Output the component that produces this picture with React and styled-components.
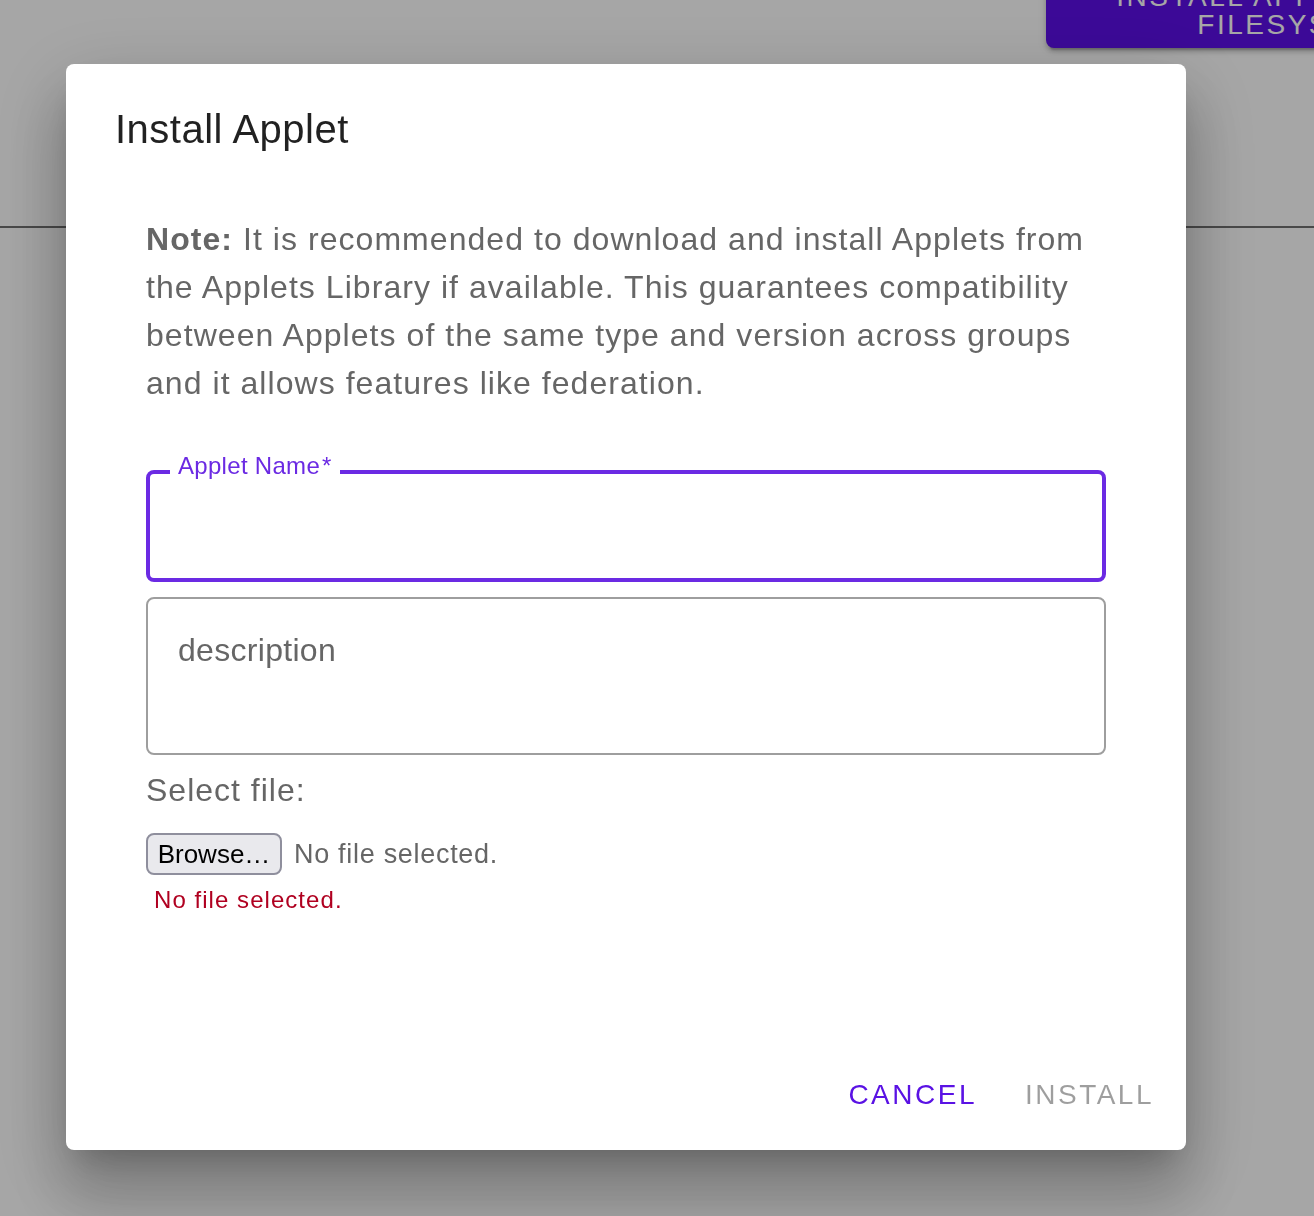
import React from "react";
import styled, { createGlobalStyle } from "styled-components";

const GlobalStyle = createGlobalStyle`
  html, body {
    margin: 0;
    padding: 0;
    height: 100%;
    overflow: hidden;
    background: #ffffff;
    font-family: "Liberation Sans", Arial, Helvetica, sans-serif;
  }
  * { box-sizing: border-box; }
`;

const Page = styled.div`
  width: 100%;
  height: 1216px;
  background: #ffffff;
`;

const Header = styled.header`
  height: 228px;
  display: flex;
  justify-content: flex-end;
  align-items: flex-start;
  border-bottom: 2px solid #707070;
`;

const TopButton = styled.button`
  flex-shrink: 0;
  width: 502px;
  height: 80px;
  margin-top: -32px;
  margin-right: -234px;
  padding: 6px 56px 0;
  border: none;
  border-radius: 8px;
  background: #5c0fe8;
  color: #ffffff;
  font-family: "Liberation Sans", Arial, sans-serif;
  font-size: 28px;
  line-height: 28px;
  letter-spacing: 2.5px;
  text-align: center;
  box-shadow: 0 6px 2px -4px rgba(0,0,0,0.2), 0 4px 4px 0 rgba(0,0,0,0.14), 0 2px 10px 0 rgba(0,0,0,0.12);
`;

const Scrim = styled.div`
  position: fixed;
  inset: 0;
  background: rgba(0, 0, 0, 0.35);
  display: flex;
  align-items: flex-start;
  padding: 64px 0 0 66px;
`;

const Dialog = styled.div`
  width: 1120px;
  height: 1086px;
  background: #ffffff;
  border-radius: 8px;
  display: flex;
  flex-direction: column;
  box-shadow:
    0 22px 76px 8px rgba(0, 0, 0, 0.16),
    0 48px 60px 6px rgba(0, 0, 0, 0.16),
    0 18px 30px -14px rgba(0, 0, 0, 0.22);
`;

const Title = styled.h2`
  margin: 0;
  padding: 33px 48px 0 49px;
  font-size: 40px;
  line-height: 64px;
  font-weight: 400;
  letter-spacing: 0.5px;
  color: rgba(0, 0, 0, 0.87);
`;

const Content = styled.div`
  padding: 0 80px;
  display: flex;
  flex-direction: column;
`;

const Note = styled.p`
  margin: 54px 0 0;
  font-size: 32px;
  line-height: 48px;
  letter-spacing: 1.05px;
  color: #666666;
`;

const NoteLead = styled.strong`
  font-weight: 700;
`;

const FieldBox = styled.label`
  position: relative;
  display: block;
  margin-top: ${(p) => p.$top}px;
  height: ${(p) => p.$height}px;
  border: ${(p) => (p.$focused ? "4px solid #6b2ae3" : "2px solid #9e9e9e")};
  border-radius: 8px;
`;

const FloatingLabel = styled.span`
  position: absolute;
  top: -20px;
  left: 20px;
  padding: 0 8px;
  background: #ffffff;
  font-size: 24px;
  line-height: 24px;
  letter-spacing: 0.3px;
  color: #6b2ae3;

  &::after {
    content: "*";
    margin-left: 2px;
  }
`;

const TextInput = styled.input`
  width: 100%;
  height: 100%;
  border: none;
  outline: none;
  background: transparent;
  padding: 0 28px;
  font-family: inherit;
  font-size: 32px;
  color: rgba(0, 0, 0, 0.87);
`;

const TextArea = styled.textarea`
  display: block;
  width: 100%;
  height: 100%;
  border: none;
  outline: none;
  resize: none;
  background: transparent;
  padding: 27px 30px;
  font-family: inherit;
  font-size: 32px;
  line-height: 48px;
  letter-spacing: 0.3px;
  color: rgba(0, 0, 0, 0.87);

  &::placeholder {
    color: #666666;
    opacity: 1;
  }
`;

const FileLabel = styled.div`
  margin-top: 11px;
  font-size: 32px;
  line-height: 48px;
  letter-spacing: 1px;
  color: #666666;
`;

const FileRow = styled.div`
  margin-top: 19px;
  display: flex;
  align-items: center;
  gap: 12px;
  height: 42px;
`;

const BrowseButton = styled.button`
  height: 42px;
  width: 136px;
  padding: 0;
  border: 2px solid #8f8f9d;
  border-radius: 8px;
  background: #e9e9ed;
  color: #000000;
  font-family: inherit;
  font-size: 26px;
  line-height: 38px;
`;

const FileName = styled.span`
  font-size: 27px;
  letter-spacing: 0.7px;
  color: #666666;
`;

const ErrorText = styled.div`
  margin-top: 9px;
  padding-left: 8px;
  font-size: 24px;
  line-height: 32px;
  letter-spacing: 1.05px;
  color: #b00020;
`;

const Actions = styled.div`
  margin-top: auto;
  padding: 0 16px 19px;
  display: flex;
  justify-content: flex-end;
  gap: 16px;
`;

const ActionButton = styled.button`
  height: 72px;
  min-width: 128px;
  padding: 0 16px;
  border: none;
  background: transparent;
  font-family: inherit;
  font-size: 28px;
  font-weight: 400;
  letter-spacing: 2.5px;
  color: ${(p) => (p.disabled ? "rgba(0, 0, 0, 0.38)" : "#5a12e4")};
  cursor: ${(p) => (p.disabled ? "default" : "pointer")};
`;

export default function App() {
  return (
    <>
      <GlobalStyle />
      <Page>
        <Header>
          <TopButton>INSTALL APPLET FROM FILESYSTEM</TopButton>
        </Header>
      </Page>
      <Scrim>
        <Dialog role="dialog" aria-labelledby="install-title">
          <Title id="install-title">Install Applet</Title>
          <Content>
            <Note>
              <NoteLead>Note:</NoteLead> It is recommended to download and install Applets from the
              Applets Library if available. This guarantees compatibility between Applets of the
              same type and version across groups and it allows features like federation.
            </Note>
            <FieldBox $focused $top={63} $height={112}>
              <FloatingLabel>Applet Name</FloatingLabel>
              <TextInput type="text" />
            </FieldBox>
            <FieldBox $top={15} $height={158}>
              <TextArea placeholder="description" />
            </FieldBox>
            <FileLabel>Select file:</FileLabel>
            <FileRow>
              <BrowseButton>Browse…</BrowseButton>
              <FileName>No file selected.</FileName>
            </FileRow>
            <ErrorText>No file selected.</ErrorText>
          </Content>
          <Actions>
            <ActionButton>CANCEL</ActionButton>
            <ActionButton disabled>INSTALL</ActionButton>
          </Actions>
        </Dialog>
      </Scrim>
    </>
  );
}
